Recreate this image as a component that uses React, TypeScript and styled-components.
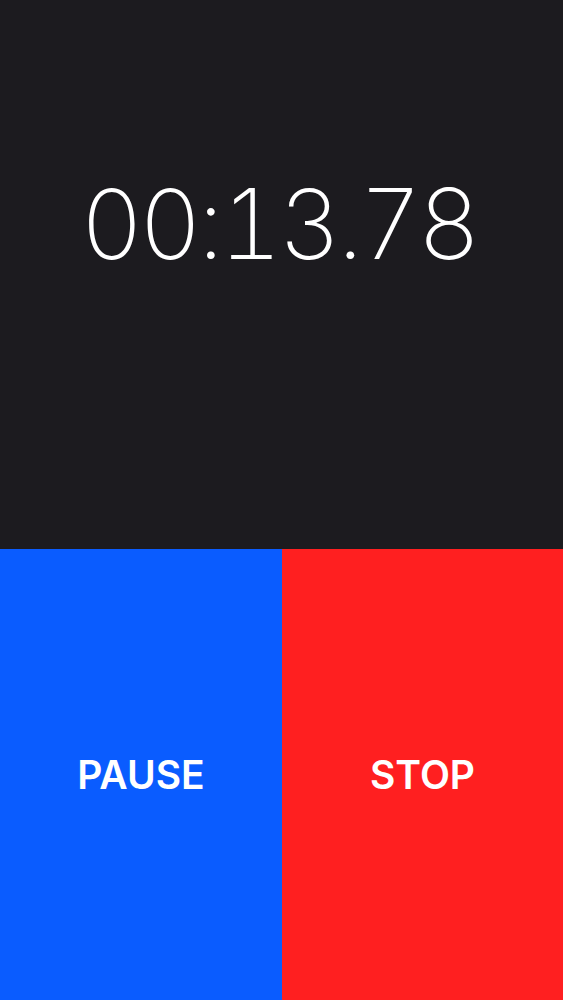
import styled, { createGlobalStyle } from "styled-components";

const Global = createGlobalStyle`
  html, body {
    margin: 0;
    padding: 0;
    background: #1c1b1f;
  }
  body {
    font-family: Inter, "Noto Sans", "Liberation Sans", sans-serif;
    -webkit-font-smoothing: antialiased;
  }
`;

const Screen = styled.div`
  width: 563px;
  height: 1000px;
  display: flex;
  flex-direction: column;
  background: #1c1b1f;
  overflow: hidden;
`;

const Display = styled.div`
  height: 549px;
  display: flex;
  justify-content: center;
  padding: 175px 6px 0 0;
  box-sizing: border-box;
`;

const Time = styled.div`
  color: #fff;
  font-size: 97px;
  font-weight: 200;
  line-height: 1;
  letter-spacing: -4px;
  font-variant-numeric: tabular-nums;
`;

const Controls = styled.div`
  flex: 1;
  display: grid;
  grid-template-columns: 282px 1fr;
`;

const Action = styled.button<{ $bg: string }>`
  border: none;
  margin: 0;
  padding: 0;
  background: ${(p) => p.$bg};
  color: #fff;
  font-family: Inter, "Noto Sans", "Liberation Sans", sans-serif;
  font-size: 39px;
  font-weight: 600;
  display: flex;
  align-items: center;
  justify-content: center;
  cursor: pointer;
`;

export default function App() {
  return (
    <Screen>
      <Global />
      <Display>
        <Time>00:13.78</Time>
      </Display>
      <Controls>
        <Action $bg="#0a5cff">PAUSE</Action>
        <Action $bg="#ff1f20">STOP</Action>
      </Controls>
    </Screen>
  );
}
